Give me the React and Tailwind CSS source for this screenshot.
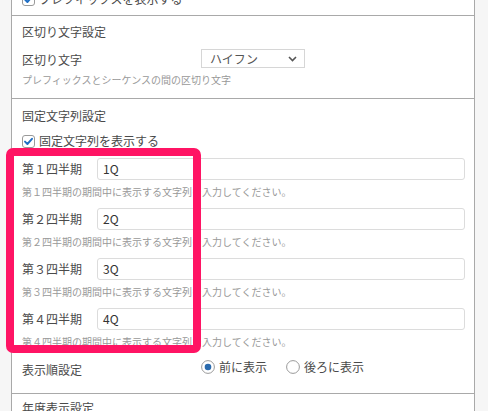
import React from "react";

function CheckBox() {
  return (
    <svg width="13" height="13" viewBox="0 0 13 13" className="shrink-0">
      <rect x="0.5" y="0.5" width="12" height="12" rx="2.5" fill="#fff" stroke="#9a9a9a" />
      <path d="M3 6.6 L5.4 9 L10 3.8" fill="none" stroke="#1f6fc5" strokeWidth="1.9" strokeLinecap="round" strokeLinejoin="round" />
    </svg>
  );
}

function Radio({ checked }) {
  return (
    <svg width="14" height="14" viewBox="0 0 14 14" className="shrink-0">
      <circle cx="7" cy="7" r="6.4" fill="#fff" stroke="#9a9a9a" strokeWidth="1" />
      {checked && <circle cx="7" cy="7" r="3.3" fill="#2a6aad" />}
    </svg>
  );
}

const quarters = ["第１四半期", "第２四半期", "第３四半期", "第４四半期"];
const values = ["1Q", "2Q", "3Q", "4Q"];

export default function App() {
  return (
    <div className="relative flex h-[411px] w-[488px] overflow-hidden bg-[#f6f6f6] font-['Noto_Sans_CJK_JP',sans-serif] text-[#4a4a4a]">
      <div className="w-[11px] shrink-0" />
      <div className="w-[464px] shrink-0 border-x border-[#a9a9a9] bg-white">
        {/* prefix section (cut off at top) */}
        <div className="flex h-[16px] flex-col overflow-hidden border-b border-[#a9a9a9] pl-[10px]">
          <div className="-mt-[9px] flex h-[16px] shrink-0 items-center gap-[4px] text-[12px] leading-[16px]">
            <CheckBox />
            <span>プレフィックスを表示する</span>
          </div>
        </div>

        {/* separator section */}
        <div className="border-b border-[#a9a9a9] pb-[11px] pl-[10px] pt-[8px]">
          <div className="text-[12px] leading-[16px]">区切り文字設定</div>
          <div className="mt-[9px] flex h-[19px] items-center">
            <div className="mt-[3px] w-[179px] text-[12px] leading-[16px]">区切り文字</div>
            <div className="flex h-[19px] w-[104px] items-center justify-between border border-[#d6d6d6] bg-white pl-[8px] pr-[7px] text-[12px] text-[#555]">
              <span>ハイフン</span>
              <svg width="9" height="6" viewBox="0 0 9 6">
                <path d="M1 1 L4.5 4.5 L8 1" fill="none" stroke="#555" strokeWidth="1.6" />
              </svg>
            </div>
          </div>
          <div className="mt-[5px] text-[10px] leading-[14px] text-[#999]">
            プレフィックスとシーケンスの間の区切り文字
          </div>
        </div>

        {/* fixed string section */}
        <div className="border-b border-[#a9a9a9] pb-[15px] pl-[10px] pr-[9px] pt-[9px]">
          <div className="text-[12px] leading-[16px]">固定文字列設定</div>
          <div className="mt-[9px] flex h-[16px] items-center gap-[4px] text-[12px] leading-[16px]">
            <CheckBox />
            <span>固定文字列を表示する</span>
          </div>
          <div className="mt-[9px] flex flex-col gap-[9px]">
            {quarters.map((q, i) => (
              <div key={q}>
                <div className="flex h-[22px] items-center">
                  <div className="w-[75px] shrink-0 text-[12px] leading-[16px]">{q}</div>
                  <div className="flex h-[22px] flex-1 items-center rounded-[3px] border border-[#dcdcdc] pl-[5px] text-[12px] text-[#333]">
                    {values[i]}
                  </div>
                </div>
                <div className="mt-[5px] text-[10px] leading-[14px] text-[#999]">
                  {q}の期間中に表示する文字列を入力してください。
                </div>
              </div>
            ))}
          </div>
          <div className="mt-[10px] flex items-start">
            <div className="w-[179px] pt-[3px] text-[12px] leading-[16px]">表示順設定</div>
            <div className="flex h-[16px] items-center text-[12px] leading-[16px]">
              <Radio checked />
              <span className="ml-[4px]">前に表示</span>
              <span className="ml-[19px]"><Radio /></span>
              <span className="ml-[4px]">後ろに表示</span>
            </div>
          </div>
        </div>

        {/* year section */}
        <div className="pl-[10px] pt-[6px]">
          <div className="text-[12px] leading-[16px]">年度表示設定</div>
        </div>
      </div>

      {/* highlight box */}
      <div className="absolute left-[6px] top-[148px] h-[205px] w-[195px] rounded-[7px] border-[8px] border-[#ff1464]" />
    </div>
  );
}
